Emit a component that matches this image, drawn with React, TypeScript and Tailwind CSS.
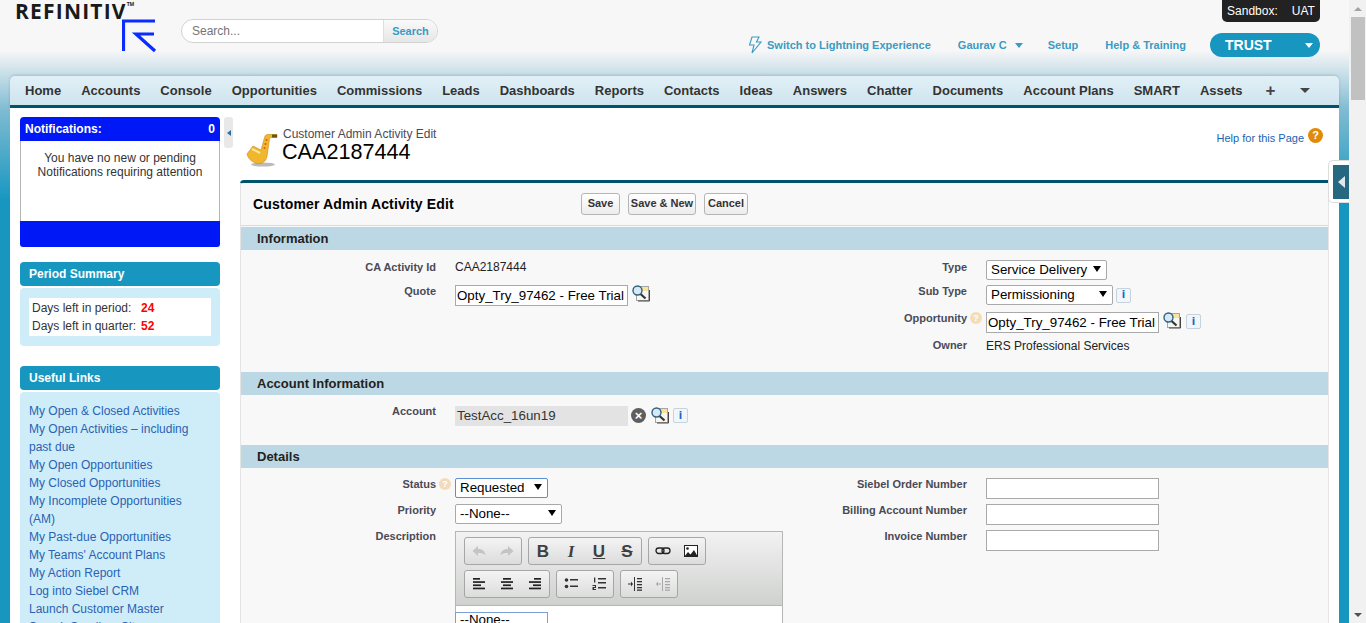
import type { ReactNode } from 'react';

const navItems = ['Home', 'Accounts', 'Console', 'Opportunities', 'Commissions', 'Leads', 'Dashboards', 'Reports', 'Contacts', 'Ideas', 'Answers', 'Chatter', 'Documents', 'Account Plans', 'SMART', 'Assets'];

const usefulLinks = [
  'My Open & Closed Activities',
  'My Open Activities – including past due',
  'My Open Opportunities',
  'My Closed Opportunities',
  'My Incomplete Opportunities (AM)',
  'My Past-due Opportunities',
  "My Teams' Account Plans",
  'My Action Report',
  'Log into Siebel CRM',
  'Launch Customer Master',
  'Search Sandbox Sites',
];

function LookupIcon() {
  return (
    <svg width="18" height="17" viewBox="0 0 18 17" className="shrink-0">
      <rect x="4.500" y="1.500" width="12" height="14" fill="#f7f7f2" stroke="#a5a5a5" />
      <rect x="9" y="2" width="7" height="4" fill="#fbe29a" />
      <path d="M6 16h11.500V5" fill="none" stroke="#444" />
      <path d="M8 8.500l5.500 5" stroke="#333" strokeWidth="2.200" />
      <circle cx="5.500" cy="5.500" r="4.500" fill="#d5e8f6" stroke="#31617e" strokeWidth="1.400" />
    </svg>
  );
}

function InfoButton() {
  return (
    <span className="flex h-[15px] w-[15px] shrink-0 items-center justify-center rounded-[2px] border border-[#c5d3dc] bg-[#f2f6fa] text-[10px] font-bold leading-none text-[#1468c8] font-['DejaVu_Sans',sans-serif]">
      i
    </span>
  );
}

function HintIcon() {
  return (
    <span className="flex h-[12px] w-[12px] shrink-0 items-center justify-center rounded-full bg-[#f3dcb9] text-[9px] font-bold leading-none text-white">
      ?
    </span>
  );
}

function Label({ children, hint }: { children: ReactNode; hint?: boolean }) {
  return (
    <div className="flex items-start justify-end gap-[3px] text-[11px] font-bold leading-[14px] text-[#4a4a56]">
      {children}
      {hint && <span className="mr-[-15px] mt-px"><HintIcon /></span>}
    </div>
  );
}

function Section({ title }: { title: string }) {
  return (
    <div className="flex h-[23px] items-center bg-[#bdd8e5] pl-[16px] text-[13px] font-bold text-[#222]">
      {title}
    </div>
  );
}

function FormButton({ children, width }: { children: ReactNode; width: string }) {
  return (
    <button className={`${width} flex h-[22px] items-center justify-center rounded-[3px] border border-[#b5b5b5] bg-gradient-to-b from-white to-[#ececec] text-[11px] font-bold text-[#333]`}>
      {children}
    </button>
  );
}

function Select({ value, width, focused }: { value: string; width: string; focused?: boolean }) {
  return (
    <span className={`${width} relative block h-[20px]`}>
      <select
        defaultValue={value}
        className={`h-full w-full appearance-none rounded-[2px] bg-white pl-[4px] text-[13.33px] leading-none text-black border ${focused ? 'border-[#5b8fd6]' : 'border-[#a9a9a9]'}`}
      >
        <option>{value}</option>
      </select>
      <span className="pointer-events-none absolute right-[6px] top-[6px] h-0 w-0 border-x-[4px] border-t-[6px] border-x-transparent border-t-black" />
    </span>
  );
}

function TextInput({ value, width = 'w-[173px]' }: { value?: string; width?: string }) {
  return (
    <input
      defaultValue={value}
      className={`${width} h-[21px] border border-[#a9a9a9] bg-white px-[1px] text-[13.33px] text-black`}
    />
  );
}

function ToolGroup({ children }: { children: ReactNode }) {
  return (
    <div className="flex h-[28px] items-center rounded-[3px] border border-[#a6a6a6] bg-gradient-to-b from-[#f4f4f4] to-[#dcdcdc]">
      {children}
    </div>
  );
}

function Tool({ children }: { children: ReactNode }) {
  return <span className="flex h-full w-[28px] items-center justify-center">{children}</span>;
}

function Glyph({ children, className = '' }: { children: ReactNode; className?: string }) {
  return <span className={`text-[17px] font-bold leading-none text-[#3f3f3f] ${className}`}>{children}</span>;
}

function Lines({ rows }: { rows: [number, number][] }) {
  return (
    <svg width="14" height="14" viewBox="0 0 14 14">
      {rows.map(([x, w], i) => (
        <rect key={i} x={x} y={1 + i * 3.200} width={w} height="1.700" fill="#222" />
      ))}
    </svg>
  );
}

function Arrow({ flip }: { flip?: boolean }) {
  return (
    <svg width="16" height="16" viewBox="0 0 16 16" className={flip ? '-scale-x-100' : ''}>
      <path d="M1.500 8L7 3v3c4 0 7 1.500 7.500 6.500C13 10.500 10.500 10 7 10v3z" fill="#c4c4c4" />
    </svg>
  );
}

function IndentIcon({ color, out }: { color: string; out?: boolean }) {
  return (
    <svg width="16" height="16" viewBox="0 0 16 16" fill={color}>
      <rect x="7" y="1" width="1" height="14" />
      <rect x="10" y="2" width="5" height="1.300" />
      <rect x="10" y="5" width="5" height="1.300" />
      <rect x="10" y="8" width="5" height="1.300" />
      <rect x="10" y="11" width="5" height="1.300" />
      <rect x="10" y="13.500" width="5" height="1.300" />
      <path d={out ? 'M6 7.500H3V5.500L1 8l2 2.500v-2h3z' : 'M1 7.500h3V5.500l2 2.500-2 2.500v-2H1z'} />
    </svg>
  );
}

function Toolbar() {
  return (
    <div className="flex h-[74px] flex-col gap-[5px] border-b border-[#b6b6b6] bg-gradient-to-b from-[#f2f2f2] to-[#cfd1cf] px-[8px] pt-[5px]">
      <div className="flex gap-[6px]">
        <ToolGroup>
          <Tool><Arrow /></Tool>
          <Tool><Arrow flip /></Tool>
        </ToolGroup>
        <ToolGroup>
          <Tool><Glyph>B</Glyph></Tool>
          <Tool><Glyph className="italic font-['Liberation_Serif',serif]">I</Glyph></Tool>
          <Tool><Glyph className="underline">U</Glyph></Tool>
          <Tool><Glyph className="line-through">S</Glyph></Tool>
        </ToolGroup>
        <ToolGroup>
          <Tool>
            <svg width="16" height="16" viewBox="0 0 16 16" fill="none" stroke="#222" strokeWidth="1.300">
              <rect x="1" y="5" width="8" height="5.500" rx="2.700" />
              <rect x="7" y="5" width="8" height="5.500" rx="2.700" />
            </svg>
          </Tool>
          <Tool>
            <svg width="16" height="16" viewBox="0 0 16 16">
              <rect x="1.500" y="2.500" width="13" height="11" fill="#fff" stroke="#222" />
              <circle cx="4.500" cy="5.500" r="1.300" fill="#222" />
              <path d="M1 14l4-5 2.500 2.500L11 7l4 7z" fill="#222" />
            </svg>
          </Tool>
        </ToolGroup>
      </div>
      <div className="flex gap-[6px]">
        <ToolGroup>
          <Tool><Lines rows={[[1, 7], [1, 12], [1, 8], [1, 12]]} /></Tool>
          <Tool><Lines rows={[[3, 8], [1, 12], [3, 8], [1, 12]]} /></Tool>
          <Tool><Lines rows={[[6, 7], [1, 12], [5, 8], [1, 12]]} /></Tool>
        </ToolGroup>
        <ToolGroup>
          <Tool>
            <svg width="16" height="16" viewBox="0 0 16 16" fill="#333">
              <circle cx="3.500" cy="4" r="1.800" />
              <circle cx="3.500" cy="10.500" r="1.800" />
              <rect x="7" y="3" width="8" height="1.500" />
              <rect x="7" y="9.500" width="8" height="1.500" />
            </svg>
          </Tool>
          <Tool>
            <svg width="16" height="16" viewBox="0 0 16 16" fill="#333">
              <rect x="3" y="1.500" width="1.300" height="5" />
              <path d="M1.500 9h3.500v3H3v1h2v1H1.500v-3h2.500v-1H1.500z" />
              <rect x="7" y="2" width="8" height="1.500" />
              <rect x="7" y="6" width="8" height="1.500" />
              <rect x="7" y="11" width="8" height="1.500" />
            </svg>
          </Tool>
        </ToolGroup>
        <ToolGroup>
          <Tool><IndentIcon color="#333" /></Tool>
          <Tool><IndentIcon color="#a8a8a8" out /></Tool>
        </ToolGroup>
      </div>
    </div>
  );
}

function Header() {
  return (
    <div className="flex h-[76px] items-start">
      <div className="ml-[15px] w-[142px] shrink-0">
        <div className="flex h-[22px] items-start text-[21px] font-bold leading-[22px] tracking-[1.200px] text-[#1a1a1a] font-['Open_Sans',sans-serif]">
          REFINITIV<span className="mt-[2px] text-[5px] leading-none tracking-normal">TM</span>
        </div>
        <svg width="36" height="34" viewBox="0 0 36 34" className="-mt-[3px] ml-[107px]">
          <path d="M1.500 32V2H33" fill="none" stroke="#0a2cff" strokeWidth="3.200" />
          <path d="M32 15H14l19 17" fill="none" stroke="#0a2cff" strokeWidth="3.200" />
        </svg>
      </div>
      <div className="ml-[24px] mt-[19px] flex h-[24px] w-[257px] overflow-hidden rounded-full border border-[#d2d2d2] bg-white">
        <input placeholder="Search..." className="min-w-0 flex-1 pl-[10px] text-[12px] placeholder:text-[#757575]" />
        <div className="flex w-[54px] items-center justify-center border-l border-[#dedede] bg-gradient-to-b from-[#fafafa] to-[#e6e6e6] text-[11px] font-bold text-[#3a9bc4]">
          Search
        </div>
      </div>
      <div className="ml-auto mr-[29px] flex flex-col items-end">
        <div className="flex h-[22px] w-[98px] items-center justify-center gap-[14px] rounded-b-[5px] bg-[#222] text-[12px] text-white">
          <span>Sandbox:</span>
          <span>UAT</span>
        </div>
        <div className="mt-[11px] flex h-[24px] items-center text-[11px] font-bold text-[#3a9bc4]">
          <svg width="14" height="18" viewBox="0 0 14 18" fill="none" stroke="#3a9bc4" strokeWidth="1.100" className="mr-[5px]">
            <path d="M4 1h7L8.500 6H13L4 17l2-8H1.500z" />
          </svg>
          <span>Switch to Lightning Experience</span>
          <span className="ml-[27px]">Gaurav C</span>
          <span className="ml-[8px] h-0 w-0 border-x-[4px] border-t-[5px] border-x-transparent border-t-[#3a9bc4]" />
          <span className="ml-[25px]">Setup</span>
          <span className="ml-[27px]">Help &amp; Training</span>
          <div className="ml-[24px] flex h-[24px] w-[110px] items-center justify-between rounded-full bg-[#1797c0] pl-[15px] pr-[7px] text-[14px] text-white">
            <span className="font-bold">TRUST</span>
            <span className="h-0 w-0 border-x-[4px] border-t-[5px] border-x-transparent border-t-white" />
          </div>
        </div>
      </div>
    </div>
  );
}

function Nav() {
  return (
    <div className="mx-[10px] flex h-[32px] items-center rounded-t-[5px] border-b-[3px] border-[#00536d] bg-gradient-to-b from-[#e2f0f7] to-[#cde4ee] pl-[5px] text-[13px] font-bold text-[#333] shadow-[0_-1px_3px_rgba(0,0,0,0.15)]">
      {navItems.map((item) => (
        <span key={item} className="px-[10px]">{item}</span>
      ))}
      <span className="ml-[13px] text-[17px] font-bold leading-none text-[#444]">+</span>
      <span className="ml-[25px] h-0 w-0 border-x-[5px] border-t-[5px] border-x-transparent border-t-[#444]" />
    </div>
  );
}

function Sidebar() {
  return (
    <aside className="ml-[10px] mt-[9px] w-[200px] shrink-0 text-[12px]">
      <div className="flex h-[24px] items-center justify-between rounded-t-[4px] bg-[#0018f5] px-[5px] font-bold text-white">
        <span>Notifications:</span>
        <span>0</span>
      </div>
      <div className="h-[80px] border-x border-[#b5b5b5] bg-white px-[10px] pt-[10px] text-center leading-[14px] text-[#333]">
        You have no new or pending Notifications requiring attention
      </div>
      <div className="h-[26px] rounded-b-[3px] bg-[#0018f5]" />

      <div className="mt-[15px] flex h-[24px] items-center rounded-[4px] bg-[#1797c0] pl-[9px] font-bold text-white">Period Summary</div>
      <div className="mt-[2px] rounded-[4px] bg-[#cfedf8] px-[9px] py-[10px]">
        <div className="grid h-[38px] grid-cols-[109px_1fr] content-center gap-y-[4px] bg-white pl-[3px] leading-[14px] text-[#333]">
          <span>Days left in period:</span>
          <b className="text-[#f00]">24</b>
          <span>Days left in quarter:</span>
          <b className="text-[#f00]">52</b>
        </div>
      </div>

      <div className="mt-[20px] flex h-[24px] items-center rounded-[4px] bg-[#1797c0] pl-[9px] font-bold text-white">Useful Links</div>
      <div className="mt-[2px] rounded-[4px] bg-[#cfedf8] px-[9px] pt-[10px] pb-[10px] leading-[18px] text-[#2a62b4]">
        {usefulLinks.map((link) => (
          <div key={link}>{link}</div>
        ))}
      </div>
    </aside>
  );
}

function Form() {
  return (
    <div className="mt-[16px] rounded-tl-[4px] border-t-[3px] border-[#00536d] bg-[#f8f8f8]">
      <div className="border-x border-[#e4e4e4]">
        <div className="flex h-[43px] items-center border-b border-[#dbdbdb]">
          <div className="ml-[12px] w-[328px] pt-[1px] text-[14px] font-bold tracking-[0.15px] text-black">Customer Admin Activity Edit</div>
          <div className="-mt-[1px] flex gap-[8px]">
            <FormButton width="w-[39px]">Save</FormButton>
            <FormButton width="w-[68px]">Save &amp; New</FormButton>
            <FormButton width="w-[44px]">Cancel</FormButton>
          </div>
        </div>

        <div className="mt-px"><Section title="Information" /></div>
        <div className="grid h-[122px] grid-cols-[195px_336px_195px_1fr] grid-rows-[24px_27px_27px_22px] content-start pt-[10px] text-[12px] text-[#222]">
          <Label>CA Activity Id</Label>
          <div className="pl-[19px] leading-[14px]">CAA2187444</div>
          <Label>Type</Label>
          <div className="pl-[19px]"><Select value="Service Delivery" width="w-[121px]" /></div>

          <Label>Quote</Label>
          <div className="mt-[1px] flex items-start gap-[4px] pl-[19px]">
            <TextInput value="Opty_Try_97462 - Free Trial" />
            <LookupIcon />
          </div>
          <Label>Sub Type</Label>
          <div className="mt-[1px] flex items-center self-start gap-[3px] pl-[19px]">
            <Select value="Permissioning" width="w-[127px]" />
            <InfoButton />
          </div>

          <div className="col-span-2" />
          <Label hint>Opportunity</Label>
          <div className="mt-[1px] flex items-start gap-[4px] pl-[19px]">
            <TextInput value="Opty_Try_97462 - Free Trial" />
            <LookupIcon />
            <span className="mt-[2px] ml-[1px]"><InfoButton /></span>
          </div>

          <div className="col-span-2" />
          <Label>Owner</Label>
          <div className="mt-[1px] pl-[19px] leading-[14px]">ERS Professional Services</div>
        </div>

        <Section title="Account Information" />
        <div className="grid h-[50px] grid-cols-[195px_1fr] pt-[9px] text-[12px]">
          <Label>Account</Label>
          <div className="mt-[2px] flex h-[24px] items-start pl-[19px]">
            <div className="flex h-[20px] w-[173px] items-center bg-[#e3e3e3] pl-[2px] text-[13.33px] text-[#333]">TestAcc_16un19</div>
            <span className="ml-[3px] mt-[2px] flex h-[15px] w-[15px] items-center justify-center rounded-full bg-[#5e5e5e] text-[13px] font-bold leading-none text-white">×</span>
            <span className="ml-[5px] mt-[1px]"><LookupIcon /></span>
            <span className="ml-[4px] mt-[2px]"><InfoButton /></span>
          </div>
        </div>

        <Section title="Details" />
        <div className="grid grid-cols-[195px_336px_195px_1fr] grid-rows-[26px_26px_1fr] pt-[9px] text-[12px]">
          <Label hint>Status</Label>
          <div className="mt-[1px] pl-[19px]"><Select value="Requested" width="w-[93px]" focused /></div>
          <Label>Siebel Order Number</Label>
          <div className="mt-[1px] pl-[19px]"><TextInput /></div>

          <Label>Priority</Label>
          <div className="mt-[1px] pl-[19px]"><Select value="--None--" width="w-[107px]" /></div>
          <Label>Billing Account Number</Label>
          <div className="mt-[1px] pl-[19px]"><TextInput /></div>

          <Label>Description</Label>
          <div className="mt-[2px] pl-[19px]">
            <div className="w-[328px] border border-[#b6b6b6]">
              <Toolbar />
              <div className="h-[120px] bg-white pt-[6px]">
                <div className="-ml-px h-[24px] w-[93px] border border-[#7c9fd6] pl-[4px] text-[13.33px] leading-[13px]">--None--</div>
              </div>
            </div>
          </div>
          <Label>Invoice Number</Label>
          <div className="mt-[1px] pl-[19px]"><TextInput /></div>
        </div>
      </div>
    </div>
  );
}

function Scrollbar() {
  return (
    <div className="flex w-[17px] shrink-0 flex-col items-center bg-[#f1f1f1]">
      <span className="mt-[7px] h-0 w-0 border-x-[4px] border-b-[4px] border-x-transparent border-b-[#a3a3a3]" />
      <div className="mt-[6px] h-[83px] w-[14px] bg-[#c1c1c1]" />
      <span className="mt-auto mb-[6px] h-0 w-0 border-x-[4px] border-t-[4px] border-x-transparent border-t-[#505050]" />
    </div>
  );
}

export default function App() {
  return (
    <div className="flex h-[623px] overflow-hidden font-['Liberation_Sans',Arial,sans-serif]">
      <div className="relative w-[1349px] shrink-0 bg-[linear-gradient(#f7f7f7_50px,#7fbbd2_110px,#1797c0_200px)]">
        <Header />
        <Nav />
        <div className="mx-[10px] flex h-[515px] overflow-hidden bg-white">
          <Sidebar />
          <div className="ml-[4px] mt-[9px] flex h-[31px] w-[9px] shrink-0 items-center justify-center rounded-[3px] bg-[#e8e8e8]">
            <span className="h-0 w-0 border-y-[3px] border-r-[4px] border-y-transparent border-r-[#2f6f9f]" />
          </div>
          <main className="ml-[7px] w-[1089px] shrink-0">
            <div className="flex h-[56px] items-start justify-between pt-[19px]">
              <div className="flex items-start">
                <svg width="32" height="34" viewBox="0 0 32 34" className="ml-[6px] mt-[6px] shrink-0">
                  <ellipse cx="17" cy="31.500" rx="12" ry="2" fill="#bbb" />
                  <path d="M31 1.500H22c-2 0-3 1-3.500 3L15 17 7 13 1 21c1 5 6 9 11 9.500 4 .5 8-2 9-7L23.500 6c.3-1 1-1.500 2-1.500H31z" fill="#f0b62c" stroke="#c98a16" strokeWidth=".6" />
                  <path d="M26 1.500h5v3h-5z" fill="#6b5310" />
                  <path d="M6 16l8 4" stroke="#fbe9a8" strokeWidth="2" />
                  <circle cx="20.500" cy="7" r="1" fill="#e0551f" />
                  <circle cx="19.500" cy="11" r="1" fill="#e0551f" />
                  <circle cx="18.500" cy="15" r="1" fill="#e0551f" />
                </svg>
                <div className="ml-[5px] pt-[1px]">
                  <div className="text-[12px] leading-[13px] text-[#4a4a56]">Customer Admin Activity Edit</div>
                  <div className="-ml-px text-[21.6px] leading-[22px] text-black">CAA2187444</div>
                </div>
              </div>
              <div className="flex items-center gap-[4px] pr-[6px] text-[11px] text-[#1a63b0]">
                <span className="translate-y-[3px]">Help for this Page</span>
                <span className="flex h-[15px] w-[15px] items-center justify-center rounded-full bg-[#e08a0c] text-[11px] font-bold leading-none text-white">?</span>
              </div>
            </div>
            <Form />
          </main>
        </div>
        <div className="absolute left-[1328px] top-[160px] flex h-[43px] w-[21px] items-center rounded-l-[5px] border border-r-0 border-[#dcdcdc] bg-white pl-[4px]">
          <div className="flex h-[34px] w-full items-center justify-center bg-[#25687f]">
            <span className="h-0 w-0 border-y-[6px] border-r-[7px] border-y-transparent border-r-[#dfe8ec]" />
          </div>
        </div>
      </div>
      <Scrollbar />
    </div>
  );
}
